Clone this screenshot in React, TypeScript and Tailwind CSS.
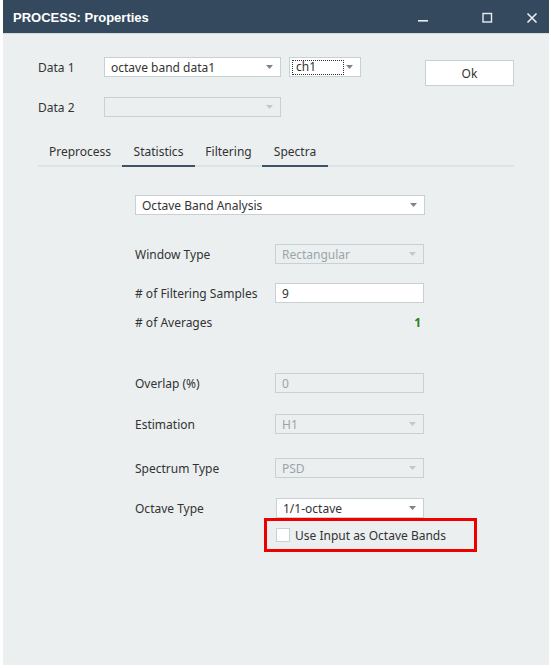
import React from "react";

const font = { fontFamily: '"Noto Sans", "Open Sans", sans-serif' };

function Arrow({ disabled }: { disabled?: boolean }) {
  return (
    <svg width="7" height="4" viewBox="0 0 7 4" className="shrink-0">
      <path d="M0 0 L7 0 L3.5 4 Z" fill={disabled ? "#c2c8cb" : "#7d8488"} />
    </svg>
  );
}

function Select({
  value,
  disabled,
  className,
}: {
  value: string;
  disabled?: boolean;
  className: string;
}) {
  return (
    <div
      className={`flex h-[20px] items-center justify-between border pl-[6px] pr-[7px] text-[12px] ${
        disabled
          ? "border-[#c7d0d3] bg-[#ebeff0] text-[#9aa5aa]"
          : "border-[#c7d0d3] bg-white text-[#333]"
      } ${className}`}
    >
      <span className="translate-y-[1px] leading-none">{value}</span>
      <Arrow disabled={disabled} />
    </div>
  );
}

function Row({ label, children, className }: { label: string; children: React.ReactNode; className: string }) {
  return (
    <div className={`flex h-[20px] items-center ${className}`}>
      <div className="w-[140px] translate-y-[1px] text-[12px] text-[#333]">{label}</div>
      {children}
    </div>
  );
}

export default function App() {
  return (
    <div className="h-[668px] w-[551px] bg-white" style={font}>
      <div className="ml-[3px] flex h-[665px] w-[546px] flex-col bg-[#ebeff0]">
        <div className="flex h-[33px] shrink-0 items-center justify-between bg-[#34495e] pl-[10px] pt-[3px]">
          <span className="text-[13px] font-bold text-white" style={{ fontFamily: '"Liberation Sans", sans-serif' }}>
            PROCESS: Properties
          </span>
          <div className="flex items-center">
            <svg width="12" height="12" viewBox="0 0 12 12" className="mr-[52px]">
              <rect x="1" y="8" width="10" height="1.6" fill="#e8edf0" />
            </svg>
            <svg width="12" height="12" viewBox="0 0 12 12" className="mr-[33px]">
              <rect x="2" y="1.5" width="8.5" height="8.5" fill="none" stroke="#e8edf0" strokeWidth="1.4" />
            </svg>
            <svg width="12" height="12" viewBox="0 0 12 12" className="mr-[11px]">
              <path d="M1.5 1.5 L10.5 10.5 M10.5 1.5 L1.5 10.5" stroke="#e8edf0" strokeWidth="1.6" />
            </svg>
          </div>
        </div>
        <div className="h-px bg-[#d3d9dc]" />

        <div className="pl-[35px] pt-[23px]">
          <div className="flex">
            <div>
              <div className="flex h-[20px] items-center">
                <div className="w-[66px] translate-y-[1px] text-[12px] text-[#333]">Data 1</div>
                <Select value="octave band data1" className="w-[177px]" />
                <div className="ml-[8px] flex h-[20px] w-[72px] items-center justify-between border border-[#c7d0d3] bg-white pl-[2px] pr-[7px] text-[12px] text-[#333]">
                  <span className="flex h-[15px] w-[52px] items-center border border-dotted border-[#333] pl-[3px] leading-none">ch1</span>
                  <Arrow />
                </div>
              </div>
              <div className="mt-[20px] flex h-[20px] items-center">
                <div className="w-[66px] translate-y-[1px] text-[12px] text-[#333]">Data 2</div>
                <Select value="" disabled className="w-[177px]" />
              </div>
            </div>
            <button className="ml-[64px] mt-[3px] h-[26px] w-[89px] border border-[#c7d0d3] bg-white pt-[1px] text-[12px] text-[#333]">
              Ok
            </button>
          </div>

          <div className="mt-[21px] flex h-[29px] w-[476px] border-b-2 border-[#dde2e4] pt-[1px] text-[12px] text-[#333]">
            <div className="flex w-[84px] items-center justify-center">Preprocess</div>
            <div className="-mb-[2px] flex w-[73px] items-center justify-center border-b-2 border-[#3d5168]">Statistics</div>
            <div className="flex w-[67px] items-center justify-center">Filtering</div>
            <div className="-mb-[2px] flex w-[66px] items-center justify-center border-b-2 border-[#3d5168]">Spectra</div>
          </div>

          <div className="pl-[97px]">
            <Select value="Octave Band Analysis" className="mt-[28px] w-[290px]" />
            <Row label="Window Type" className="mt-[29px]">
              <Select value="Rectangular" disabled className="w-[149px]" />
            </Row>
            <Row label="# of Filtering Samples" className="mt-[19px]">
              <div className="flex h-[20px] w-[149px] items-center border border-[#c7d0d3] bg-white pl-[6px] pt-[1px] text-[12px] text-[#333]">9</div>
            </Row>
            <Row label="# of Averages" className="mt-[9px]">
              <div className="w-[149px] translate-y-[1px] pr-[3px] text-right text-[12px] font-bold text-[#2e7d1f]">1</div>
            </Row>
            <Row label="Overlap (%)" className="mt-[41px]">
              <div className="flex h-[20px] w-[149px] items-center border border-[#c7d0d3] bg-[#ebeff0] pl-[6px] pt-[1px] text-[12px] text-[#9aa5aa]">0</div>
            </Row>
            <Row label="Estimation" className="mt-[21px]">
              <Select value="H1" disabled className="w-[149px]" />
            </Row>
            <Row label="Spectrum Type" className="mt-[24px]">
              <Select value="PSD" disabled className="w-[149px]" />
            </Row>
            <Row label="Octave Type" className="mt-[20px]">
              <Select value="1/1-octave" className="ml-[1px] w-[148px]" />
            </Row>
            <div className="ml-[129px] flex h-[34px] w-[213px] items-center border-[3px] border-[#ee0000] pl-[9px]">
              <div className="h-[14px] w-[14px] border border-[#c7d0d3] bg-white" />
              <span className="ml-[5px] translate-y-[1px] text-[12px] text-[#333]">Use Input as Octave Bands</span>
            </div>
          </div>
        </div>
      </div>
    </div>
  );
}
